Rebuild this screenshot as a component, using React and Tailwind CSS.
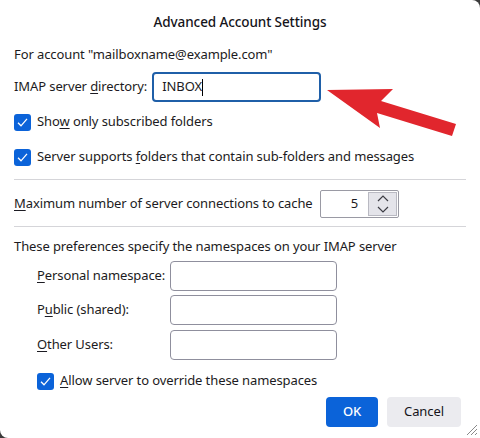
import React from "react"

const font = { fontFamily: '"Noto Sans", "Segoe UI", sans-serif' }

function Check({ children, className = "" }) {
  return (
    <div className={`flex items-center h-[20px] ${className}`}>
      <span className="w-[17px] h-[17px] rounded-[3px] bg-[#0b63d9] flex items-center justify-center shrink-0">
        <svg width="13" height="13" viewBox="0 0 13 13" fill="none">
          <path d="M2 6.8 L5 9.8 L11 2.8" stroke="white" strokeWidth="1.3" />
        </svg>
      </span>
      <span className="ml-[6px] whitespace-nowrap">{children}</span>
    </div>
  )
}

function U({ children }) {
  return <span className="underline underline-offset-2 decoration-1">{children}</span>
}

function Field({ label, className = "" }) {
  return (
    <div className={`flex items-center h-[30px] pl-[23px] ${className}`}>
      <span className="w-[133px] whitespace-nowrap">{label}</span>
      <div className="w-[167px] h-[30px] rounded-[4px] border border-[#8f8f9d] bg-white"></div>
    </div>
  )
}

export default function App() {
  return (
    <div className="w-[480px] h-[438px] bg-[#3b3b3b] overflow-hidden">
      <div className="relative w-[480px] h-[438px] bg-white rounded-tr-[8px] rounded-bl-[8px] text-[13px] tracking-[-0.1px] text-[#1c1b22]" style={font}>
        <div className="h-[44px] flex items-center justify-center font-medium text-[13.5px] text-[#15141a]">Advanced Account Settings</div>
        <div className="px-[14px]">
          <div className="h-[20px] leading-[20px] whitespace-nowrap">For account "mailboxname@example.com"</div>

          <div className="mt-[8px] h-[30px] flex items-center">
            <span className="whitespace-nowrap">IMAP server <U>d</U>irectory:</span>
            <div className="ml-[5px] w-[169px] h-[30px] rounded-[4px] border-2 border-[#1f5fa8] flex items-center pl-[8px]">
              INBOX<span className="w-px h-[17px] bg-black"></span>
            </div>
          </div>

          <Check className="mt-[10px]">Sho<U>w</U> only subscribed folders</Check>
          <Check className="mt-[15px]">Server supports <U>f</U>olders that contain sub-folders and messages</Check>

          <div className="mt-[12px] h-px bg-[#d5d5d9]"></div>

          <div className="mt-[10px] h-[28px] flex items-center">
            <span className="whitespace-nowrap"><U>M</U>aximum number of server connections to cache</span>
            <div className="ml-auto mr-[67px] w-[79px] h-[28px] border border-[#9a9aa4] rounded-[2px] flex items-center">
              <span className="flex-1 text-right pr-[10px]">5</span>
              <div className="w-[29px] h-[24px] mr-[1px] bg-[#e4e4ea] border border-[#b9b9c2] flex flex-col">
                <div className="flex-1 flex items-center justify-center">
                  <svg width="12" height="7" viewBox="0 0 12 7"><path d="M1 6 L6 1 L11 6" stroke="#3c3c44" strokeWidth="1.2" fill="none" /></svg>
                </div>
                <div className="flex-1 flex items-center justify-center">
                  <svg width="12" height="7" viewBox="0 0 12 7"><path d="M1 1 L6 6 L11 1" stroke="#3c3c44" strokeWidth="1.2" fill="none" /></svg>
                </div>
              </div>
            </div>
          </div>

          <div className="mt-[8px] h-px bg-[#d5d5d9]"></div>

          <div className="mt-[9px] h-[20px] leading-[20px] whitespace-nowrap">These preferences specify the namespaces on your IMAP server</div>

          <Field className="mt-[5px]" label={<><U>P</U>ersonal namespace:</>} />
          <Field className="mt-[4px]" label={<>P<U>u</U>blic (shared):</>} />
          <Field className="mt-[5px]" label={<><U>O</U>ther Users:</>} />

          <Check className="mt-[11px] ml-[23px]"><U>A</U>llow server to override these namespaces</Check>

          <div className="mt-[6px] flex justify-end gap-[9px] pr-[5px]">
            <button className="w-[52px] h-[30px] rounded-[4px] bg-[#0b63d9] text-white font-medium">OK</button>
            <button className="w-[74px] h-[30px] rounded-[4px] bg-[#ebebef] text-[#15141a]">Cancel</button>
          </div>
        </div>

        <svg className="absolute right-[2px] bottom-[2px]" width="14" height="14" viewBox="0 0 14 14">
          <path d="M13 3 L3 13 M13 7 L7 13 M13 11 L11 13" stroke="#8a8a8a" strokeWidth="1" />
        </svg>

        <svg className="absolute left-0 top-0 pointer-events-none" width="480" height="438" viewBox="0 0 480 438">
          <polygon points="327,90 393,89 381,101 456,124 452,136 377,113 380,128" fill="#e1262d" />
        </svg>
      </div>
    </div>
  )
}
